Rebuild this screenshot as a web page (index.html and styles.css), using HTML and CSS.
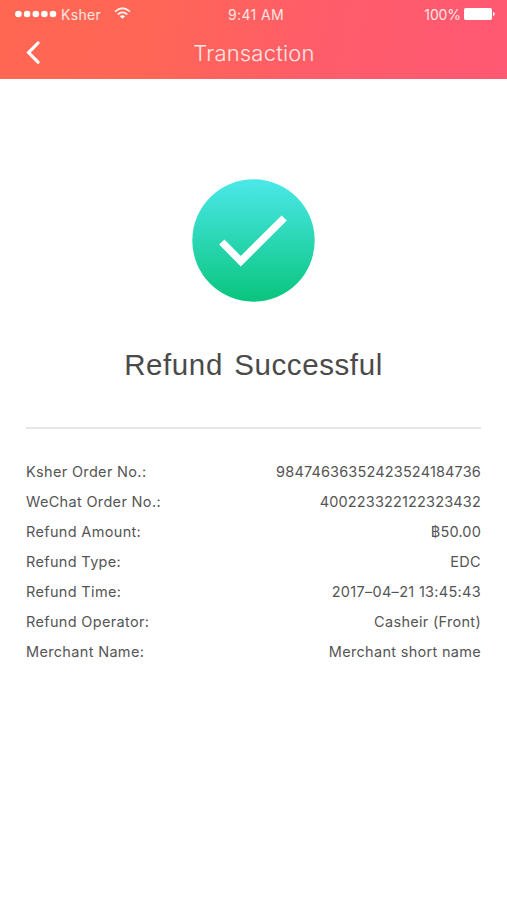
FILE: index.html
```html
<!DOCTYPE html>
<html lang="en">
<head>
<meta charset="utf-8">
<title>Transaction</title>
<link rel="stylesheet" href="styles.css">
</head>
<body>
<header class="header">
  <div class="status">
    <div class="carrier">
      <svg width="42" height="8" viewBox="0 0 42 8" fill="#fff"><circle cx="3.4" cy="4" r="3.3"/><circle cx="12.1" cy="4" r="3.3"/><circle cx="20.8" cy="4" r="3.3"/><circle cx="29.4" cy="4" r="3.3"/><circle cx="38" cy="4" r="3.3"/></svg>
      <span class="carrier-name">Ksher</span>
      <svg class="wifi" width="17" height="12" viewBox="0 0 17 12" fill="none" stroke="#ffeeeb" stroke-width="1.8"><path d="M1 4.6Q8.5-2 16 4.6"/><path d="M3.7 7.5Q8.5 3.2 13.3 7.5"/><path d="M8.5 11.8L5.9 9.3Q8.5 7 11.1 9.3Z" fill="#fff" stroke="none"/></svg>
    </div>
    <span class="clock">9:41 AM</span>
    <div class="power">
      <span class="percent">100%</span>
      <svg width="31" height="12" viewBox="0 0 31 12" fill="#fff"><rect width="28" height="12" rx="1.8"/><path d="M29 4Q30.8 4.5 30.8 6T29 8Z"/></svg>
    </div>
  </div>
  <nav class="nav">
    <svg class="back" width="14" height="24" viewBox="0 0 14 24" fill="none" stroke="#fff" stroke-width="3.2" stroke-linecap="round" stroke-linejoin="miter"><path d="M12 2L2.6 11.6L12 21.2"/></svg>
    <h1 class="nav-title">Transaction</h1>
  </nav>
</header>
<main class="content">
  <section class="result">
    <svg class="badge" width="123" height="123" viewBox="0 0 123 123">
      <defs><linearGradient id="mint" x1="0" y1="0" x2="0" y2="1"><stop offset="0" stop-color="#4be8e9"/><stop offset="1" stop-color="#09c57d"/></linearGradient></defs>
      <circle cx="61.5" cy="61.5" r="61.2" fill="url(#mint)"/>
      <path d="M29.8 63L48.8 82.2L92.2 39" fill="none" stroke="#fff" stroke-width="7.4"/>
    </svg>
    <h2 class="headline">Refund Successful</h2>
  </section>
  <dl class="details">
    <div class="row"><dt>Ksher Order No.:</dt><dd class="digits">98474636352423524184736</dd></div>
    <div class="row"><dt>WeChat Order No.:</dt><dd class="digits">400223322122323432</dd></div>
    <div class="row"><dt>Refund Amount:</dt><dd class="digits">฿50.00</dd></div>
    <div class="row"><dt>Refund Type:</dt><dd>EDC</dd></div>
    <div class="row"><dt>Refund Time:</dt><dd>2017–04–21 13:45:43</dd></div>
    <div class="row"><dt>Refund Operator:</dt><dd>Casheir (Front)</dd></div>
    <div class="row"><dt>Merchant Name:</dt><dd>Merchant short name</dd></div>
  </dl>
</main>
</body>
</html>
```
FILE: styles.css
```css
* { box-sizing: border-box; }
body {
  margin: 0;
  min-height: 900px;
  background: #fff;
  color: #555;
  font-family: Inter, "Liberation Sans", sans-serif;
}
svg { display: block; flex: none; }
.header {
  height: 79px;
  background: linear-gradient(100deg, #ff6753 0%, #ff6656 30%, #ff5c6b 65%, #ff5973 100%);
  color: #ffe6e2;
}
.status {
  display: grid;
  grid-template-columns: 1fr auto 1fr;
  align-items: center;
  height: 28px;
  padding: 0 12px 0 15px;
  font-size: 14px;
}
.carrier, .power { display: flex; align-items: center; }
.carrier-name { margin-left: 4px; padding-top: 1px; letter-spacing: 0.3px; }
.wifi { margin-left: 13px; margin-top: -2px; }
.clock { padding: 1px 0 0 2px; letter-spacing: 0.4px; }
.power { justify-content: flex-end; }
.percent { margin-right: 3px; padding-top: 1px; letter-spacing: -0.1px; }
.nav {
  display: grid;
  grid-template-columns: 40px 1fr 40px;
  align-items: center;
  height: 50px;
  padding: 0 12px 0 13px;
}
.back { margin-left: 13px; }
.nav-title {
  margin: 0;
  text-align: center;
  font-size: 22px;
  font-weight: 300;
  letter-spacing: 0.2px;
}
.content { padding: 100px 26px 0; }
.result {
  display: flex;
  flex-direction: column;
  align-items: center;
  height: 250px;
  border-bottom: 2px solid #e6e6e6;
}
.headline {
  margin: 45px 0 0;
  font-family: "Liberation Sans", Arial, sans-serif;
  font-size: 29.5px;
  line-height: 36px;
  font-weight: 400;
  letter-spacing: 0.6px;
  word-spacing: 2.5px;
  color: #4a4a4a;
}
.details { margin: 27px 0 0; }
.row {
  display: flex;
  justify-content: space-between;
  align-items: center;
  height: 30.15px;
  font-size: 14.5px;
  white-space: nowrap;
}
dt { letter-spacing: 0.33px; }
dd { margin: 0; letter-spacing: 0.3px; }
.digits { letter-spacing: 0.16px; }
```
